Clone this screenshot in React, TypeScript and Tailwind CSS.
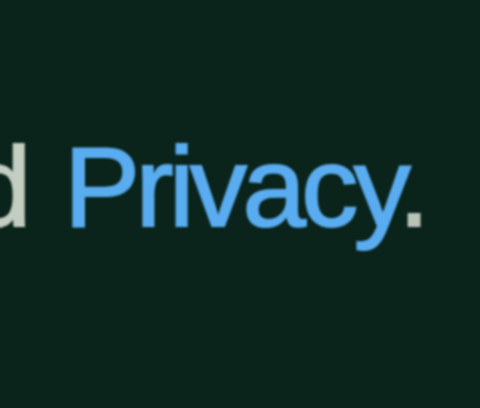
import React from "react";

export default function App() {
  return (
    <div className="w-[480px] h-[408px] overflow-hidden bg-[#0a241c]">
      <div className="pt-[130px] flex">
        <p
          className="ml-[-32px] whitespace-nowrap text-[114px] leading-none tracking-[-4.5px] blur-[1.3px] [-webkit-text-stroke:2px_currentColor]"
          style={{ fontFamily: '"Liberation Sans", Arial, sans-serif' }}
        >
          <span className="text-[#c3cdc1] mr-[10px]">d </span>
          <span className="text-[#5aacf0]">Privacy</span>
          <span className="text-[#b9c3b7] ml-[-8px]">.</span>
        </p>
      </div>
    </div>
  );
}
